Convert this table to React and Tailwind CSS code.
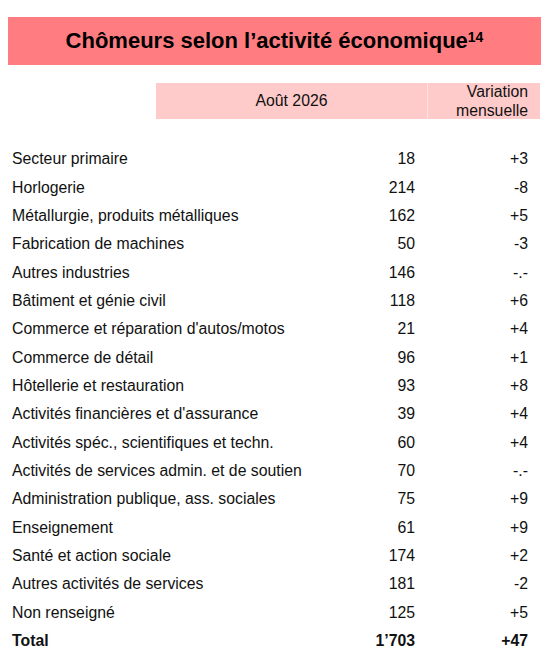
const rows = [
  ['Secteur primaire', '18', '+3'],
  ['Horlogerie', '214', '-8'],
  ['Métallurgie, produits métalliques', '162', '+5'],
  ['Fabrication de machines', '50', '-3'],
  ['Autres industries', '146', '-.-'],
  ['Bâtiment et génie civil', '118', '+6'],
  ["Commerce et réparation d'autos/motos", '21', '+4'],
  ['Commerce de détail', '96', '+1'],
  ['Hôtellerie et restauration', '93', '+8'],
  ["Activités financières et d'assurance", '39', '+4'],
  ['Activités spéc., scientifiques et techn.', '60', '+4'],
  ['Activités de services admin. et de soutien', '70', '-.-'],
  ['Administration publique, ass. sociales', '75', '+9'],
  ['Enseignement', '61', '+9'],
  ['Santé et action sociale', '174', '+2'],
  ['Autres activités de services', '181', '-2'],
  ['Non renseigné', '125', '+5'],
];

function Row({ label, value, change, bold }) {
  return (
    <div className={`grid h-[28.35px] grid-cols-[1fr_120px_113px] items-center ${bold ? 'font-bold' : ''}`}>
      <div className="whitespace-nowrap pl-[4px]">{label}</div>
      <div className="pr-[12px] text-right">{value}</div>
      <div className="pr-[12px] text-right">{change}</div>
    </div>
  );
}

export default function App() {
  return (
    <div
      className="min-h-[659px] w-[553px] bg-white px-[8px] pt-[17px] text-[15.8px] text-[#111]"
      style={{ fontFamily: '"Liberation Sans", Arial, sans-serif' }}
    >
      <div className="flex h-[48px] w-[533px] items-center justify-center bg-[#ff7c80]">
        <h1 className="text-[22px] font-bold leading-none text-black">
          Chômeurs selon l’activité économique
          <sup className="relative top-[2px] align-super text-[14px]">14</sup>
        </h1>
      </div>

      <div className="mt-[18px] grid w-[532px] grid-cols-[148px_271px_113px]">
        <div />
        <div className="flex h-[36px] items-center justify-center bg-[#ffcaca]">Août 2026</div>
        <div className="flex h-[36px] flex-col justify-center border-l border-[#ffe4e4] bg-[#ffcaca] pr-[12px] text-right leading-[19px]">
          <span>Variation</span>
          <span>mensuelle</span>
        </div>
      </div>

      <div className="mt-[26px] w-[532px]">
        {rows.map(([label, value, change]) => (
          <Row key={label} label={label} value={value} change={change} />
        ))}
        <Row label="Total" value="1’703" change="+47" bold />
      </div>
    </div>
  );
}
